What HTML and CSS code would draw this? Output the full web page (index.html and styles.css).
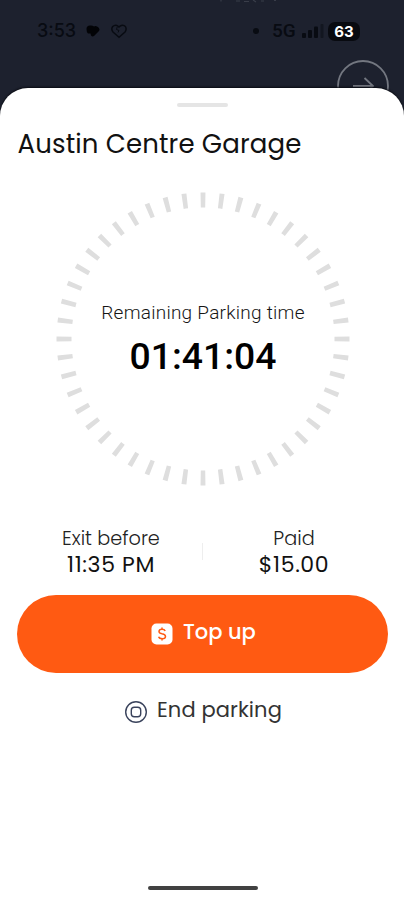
FILE: index.html
```
<!DOCTYPE html>
<html lang="en">
<head>
<meta charset="utf-8">
<title>Parking session</title>
<link rel="stylesheet" href="styles.css">
</head>
<body>
<div class="phone">
  <svg class="map-edge" width="60" height="4" viewBox="0 0 60 4" stroke="#454a55" stroke-width="1.200" fill="none"><path d="M3 0V1.500M18 1H22M26 1.500H31M35 0L38 2M43 1H46M56 .5H58"/></svg>
  <header class="status">
    <span class="clock">3:53</span>
    <svg class="glyph-solid" width="16" height="14" viewBox="0 0 16 14"><path d="M1.500 5Q1.500 1.500 5 1.500Q7.500 1.200 9 2.500Q10.500 1.200 12.500 2.800Q15.500 5 14 7L9 12Q7.500 13 6 11.500L5.500 9.500H3Q1.500 8.500 1.500 5Z" fill="#020306"/></svg>
    <svg class="glyph-heart" width="18" height="15" viewBox="0 0 18 15" fill="none" stroke="#080b12" stroke-width="1.500"><path d="M9 13.200L3 8Q0.800 5 2.700 2.500Q5.500 0 8 2.200L9 3L10 2.200Q13 0 15.400 2.500Q17 5.500 15 8Z"/><path d="M7.200 3L6.500 5.500L9 6.500L8 8.500" stroke-width="1"/></svg>
    <span class="dot"></span>
    <span class="network">5G</span>
    <svg class="signal" width="24" height="18" viewBox="0 0 24 18"><g fill="#080b12"><rect x="1" y="11" width="4" height="5" rx="1"/><rect x="7" y="8" width="4" height="8" rx="1"/><rect x="13" y="4.500" width="4" height="11.500" rx="1"/></g><rect x="19.500" y="2" width="3" height="14" rx="1" fill="#121620"/></svg>
    <span class="battery">63</span>
  </header>
  <svg class="next" width="54" height="54" viewBox="0 0 54 54" fill="none" stroke="#737780" stroke-width="1.800"><circle cx="27" cy="27" r="25"/><path d="M17 27H37M28.500 19L37 27L28.500 35"/></svg>
  <main class="sheet">
    <div class="grabber"></div>
    <h1 class="title">Austin Centre Garage</h1>
    <section class="timer">
      <svg class="dial" width="296" height="296" viewBox="0 0 296 296"><circle cx="148" cy="148" r="139" fill="none" stroke="#dedede" stroke-width="15" pathLength="480" stroke-dasharray="2.6 7.4" stroke-dashoffset="1.3"/></svg>
      <div class="reading">
        <div class="caption">Remaining Parking time</div>
        <div class="remaining">01:41:04</div>
      </div>
    </section>
    <section class="facts">
      <div class="fact exit"><span class="label">Exit before</span><span class="value">11:35 PM</span></div>
      <div class="divider"></div>
      <div class="fact paid"><span class="label">Paid</span><span class="value">$15.00</span></div>
    </section>
    <button class="topup">
      <svg width="22" height="22" viewBox="0 0 22 22"><rect x=".5" y=".5" width="21" height="21" rx="5" fill="#fff"/><path d="M14.200 8Q13.500 6.300 11 6.300Q8 6.300 8 8.500Q8 10.300 11 10.800Q14.500 11.300 14.500 13.500Q14.500 15.800 11.300 15.800Q8.300 15.800 7.600 13.800M11 4.500V6.500M11 15.500V17.500" fill="none" stroke="#ff5a12" stroke-width="1.500"/></svg>
      <span class="topup-text">Top up</span>
    </button>
    <button class="end">
      <svg width="24" height="24" viewBox="0 0 24 24" fill="none" stroke="#3a435c" stroke-width="1.400"><circle cx="12" cy="12" r="10.300"/><rect x="7.300" y="7.300" width="9.400" height="9.400" rx="3"/></svg>
      <span class="end-text">End parking</span>
    </button>
    <div class="home"></div>
  </main>
</div>
</body>
</html>
```
FILE: styles.css
```
* { box-sizing: border-box; }
body { margin: 0; background: #1d212e; font-family: Poppins, Inter, sans-serif; color: #111; }
button { border: 0; padding: 0; background: none; font: inherit; }
svg { display: block; flex: none; }
.phone { position: relative; width: 404px; height: 900px; overflow: hidden; display: flex; flex-direction: column; background: #1d212e; }
.map-edge { position: absolute; left: 218px; top: 0; opacity: 0.7; }
.status { height: 88px; flex: none; display: flex; align-items: center; padding: 0 40px 26px 37px; color: #080b12; white-space: nowrap; }
.clock { width: 48px; font: 500 18px/24px Inter, sans-serif; }
.glyph-heart { margin-left: 9px; }
.dot { width: 6px; height: 6px; border-radius: 50%; background: #080b12; margin-left: 125px; }
.network { margin-left: 13px; width: 29px; font: 500 19px/24px Roboto, sans-serif; }
.battery { margin-left: 3px; width: 32px; height: 19px; border-radius: 7px; background: #080a10; color: #fff; font: 700 15px/19px Inter, sans-serif; text-align: center; }
.next { position: absolute; left: 336px; top: 59px; }
.sheet { position: relative; height: 812px; flex: none; display: flex; flex-direction: column; background: #fff; border-radius: 28px 28px 0 0; box-shadow: 0 -1px 2px #090b12; }
.grabber { width: 51px; height: 4px; margin: 15px 0 0 177px; border-radius: 2px; background: #e5e5e5; }
.title { margin: 19px 0 0 17.500px; font-size: 26px; line-height: 36px; font-weight: 400; letter-spacing: 0.15px; white-space: nowrap; }
.timer { display: grid; margin: 29px 0 0 55px; width: 296px; height: 296px; }
.dial, .reading { grid-area: 1 / 1; }
.reading { padding-top: 110px; text-align: center; font-family: Roboto, sans-serif; white-space: nowrap; }
.caption { font-size: 19px; line-height: 24px; font-weight: 300; letter-spacing: 0.25px; color: #151515; }
.remaining { margin-top: 8px; font-size: 37.300px; line-height: 46px; font-weight: 500; color: #000; }
.facts { display: flex; align-items: center; height: 56px; margin-top: 36px; padding-left: 20px; }
.fact { width: 182px; display: flex; flex-direction: column; align-items: center; line-height: 27px; white-space: nowrap; }
.label { font-size: 19.300px; font-weight: 300; color: #222; }
.value { font-size: 22px; font-weight: 400; letter-spacing: 0.6px; line-height: 26px; }
.divider { width: 1px; height: 17px; background: #eee; }
.topup { width: 371px; height: 78px; margin: 16px 0 0 17px; border-radius: 39px; background: #ff5a12; color: #fff; display: flex; align-items: center; padding-left: 134px; gap: 10px; }
.topup-text { font-size: 21px; font-weight: 500; line-height: 28px; padding-bottom: 4px; }
.end { display: flex; align-items: center; height: 32px; margin: 23px 0 0 124px; gap: 9px; color: #333; }
.end-text { font-size: 21px; line-height: 30px; white-space: nowrap; padding-bottom: 4px; letter-spacing: 0.1px; }
.home { width: 110px; height: 4px; margin: auto 0 10px 148px; border-radius: 2px; background: #414141; }
```
